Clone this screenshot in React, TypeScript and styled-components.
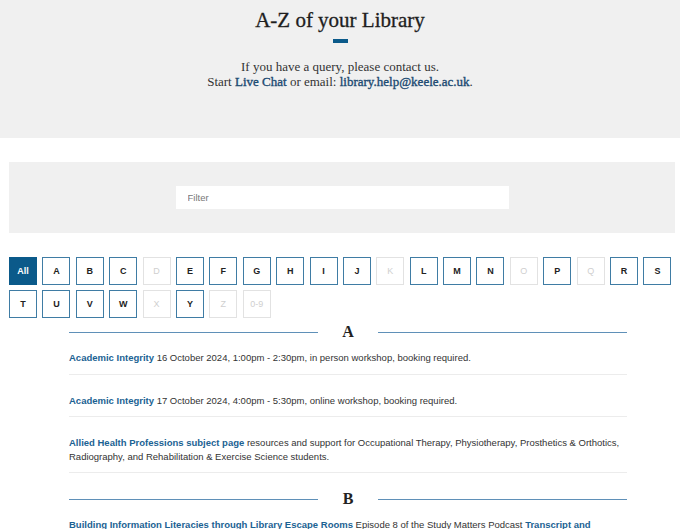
import React from "react";
import styled, { createGlobalStyle } from "styled-components";

const GlobalStyle = createGlobalStyle`
  html, body {
    margin: 0;
    padding: 0;
    overflow: hidden;
    background: #ffffff;
  }
  * {
    box-sizing: border-box;
  }
`;

const LETTERS = [
  "All", "A", "B", "C", "D", "E", "F", "G", "H", "I", "J", "K", "L", "M",
  "N", "O", "P", "Q", "R", "S", "T", "U", "V", "W", "X", "Y", "Z", "0-9",
];
const EMPTY = ["D", "K", "O", "Q", "X", "Z", "0-9"];

type Entry = { title: string; text: string; extra?: string; tail?: string };

const SECTIONS: { letter: string; entries: Entry[] }[] = [
  {
    letter: "A",
    entries: [
      {
        title: "Academic Integrity",
        text: " 16 October 2024, 1:00pm - 2:30pm, in person workshop, booking required.",
      },
      {
        title: "Academic Integrity",
        text: " 17 October 2024, 4:00pm - 5:30pm, online workshop, booking required.",
      },
      {
        title: "Allied Health Professions subject page",
        text:
          " resources and support for Occupational Therapy, Physiotherapy, Prosthetics & Orthotics, Radiography, and Rehabilitation & Exercise Science students.",
      },
    ],
  },
  {
    letter: "B",
    entries: [
      {
        title: "Building Information Literacies through Library Escape Rooms",
        text: " Episode 8 of the Study Matters Podcast ",
        extra: "Transcript and downloadable audio",
        tail: " available.",
      },
    ],
  },
];

export default function App() {
  return (
    <>
      <GlobalStyle />
      <Hero>
        <Title>A-Z of your Library</Title>
        <TitleBar />
        <Intro>
          If you have a query, please contact us.
          <br />
          Start <HeroLink>Live Chat</HeroLink> or email:{" "}
          <HeroLink>library.help@keele.ac.uk</HeroLink>.
        </Intro>
      </Hero>

      <FilterPanel>
        <FilterInput placeholder="Filter" />
      </FilterPanel>

      <LetterGrid>
        {LETTERS.map((l) => (
          <LetterButton
            key={l}
            $active={l === "All"}
            $disabled={EMPTY.includes(l)}
          >
            {l}
          </LetterButton>
        ))}
      </LetterGrid>

      <Listing>
        {SECTIONS.map((section) => (
          <Section key={section.letter}>
            <SectionHeader>
              <Rule />
              <SectionLetter>{section.letter}</SectionLetter>
              <Rule />
            </SectionHeader>
            {section.entries.map((e, i) => (
              <EntryRow key={i}>
                <EntryLink>{e.title}</EntryLink>
                {e.text}
                {e.extra && <EntryLink>{e.extra}</EntryLink>}
                {e.tail}
              </EntryRow>
            ))}
          </Section>
        ))}
      </Listing>
    </>
  );
}

const Hero = styled.header`
  height: 138px;
  background-color: #f0f0f0;
  padding-top: 6px;
  text-align: center;
  color: #2a2a2a;
  font-family: "Liberation Serif", "Times New Roman", serif;
`;

const Title = styled.h1`
  margin: 0;
  font-size: 21px;
  line-height: 28px;
  font-weight: normal;
  color: #1e1e1e;
  -webkit-text-stroke: 0.3px #1e1e1e;
`;

const TitleBar = styled.div`
  width: 15px;
  height: 4px;
  margin: 5px auto 0;
  background-color: #0b5a8a;
`;

const Intro = styled.p`
  margin: 16px 0 0;
  font-size: 13px;
  line-height: 15px;
  color: #333333;
`;

const HeroLink = styled.a`
  color: #1c4a72;
  text-decoration: none;
  -webkit-text-stroke: 0.35px #1c4a72;
`;

const FilterPanel = styled.section`
  height: 71px;
  margin: 24px 5px 0 9px;
  background-color: #f0f0f0;
  display: flex;
  align-items: center;
  justify-content: center;
`;

const FilterInput = styled.input`
  width: 333px;
  height: 23px;
  border: none;
  outline: none;
  padding: 0 12px;
  background: #ffffff;
  font-family: "Liberation Sans", Arial, sans-serif;
  font-size: 9.5px;
  color: #333333;
  &::placeholder {
    color: #777777;
  }
`;

const LetterGrid = styled.nav`
  display: flex;
  flex-wrap: wrap;
  gap: 5px 5.4px;
  margin: 24px 8px 0 9px;
`;

const LetterButton = styled.button<{ $active?: boolean; $disabled?: boolean }>`
  width: 28px;
  height: 28px;
  padding: 0;
  border: 1.5px solid
    ${(p) => (p.$active ? "#0b5a8a" : p.$disabled ? "#e2e2e2" : "#3f7ca4")};
  background-color: ${(p) => (p.$active ? "#0b5a8a" : "#ffffff")};
  color: ${(p) => (p.$active ? "#ffffff" : p.$disabled ? "#cfcfcf" : "#222222")};
  font-family: "Liberation Sans", Arial, sans-serif;
  font-size: 9px;
  font-weight: ${(p) => (p.$disabled ? "normal" : "bold")};
  cursor: ${(p) => (p.$disabled ? "default" : "pointer")};
`;

const Listing = styled.main`
  width: 558px;
  margin-left: 69px;
`;

const Section = styled.section`
  & + & {
    margin-top: 12px;
  }
`;

const SectionHeader = styled.div`
  height: 28px;
  display: flex;
  align-items: center;
`;

const Rule = styled.div`
  flex: 1;
  border-top: 1.5px solid #5f90b8;
`;

const SectionLetter = styled.h2`
  width: 60px;
  margin: 0;
  text-align: center;
  font-family: "Liberation Serif", "Times New Roman", serif;
  font-size: 16px;
  font-weight: bold;
  color: #222222;
`;

const EntryRow = styled.p`
  margin: 0;
  padding: 19px 0 9px;
  border-bottom: 1px solid #ececec;
  font-family: "Liberation Sans", Arial, sans-serif;
  font-size: 9.5px;
  line-height: 13.5px;
  color: #333333;
  ${SectionHeader} + & {
    padding-top: 5px;
  }
`;

const EntryLink = styled.a`
  color: #1b6293;
  font-weight: bold;
  text-decoration: none;
`;
